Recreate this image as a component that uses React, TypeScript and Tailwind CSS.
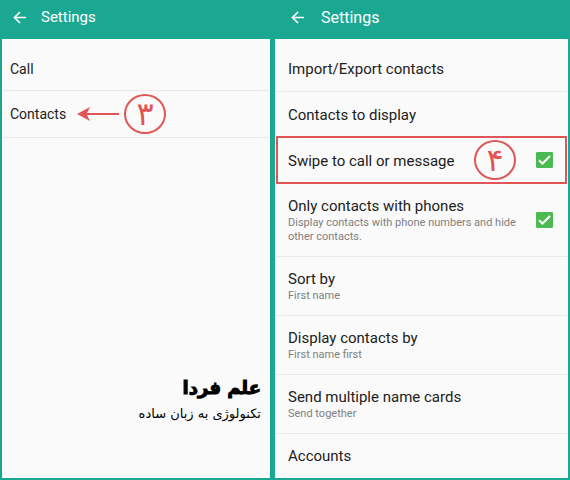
import { ReactNode } from "react";

type Item = {
    title: string;
    note?: string;
    checkbox?: boolean;
};

const items: Item[] = [
    { title: "Only contacts with phones", note: "Display contacts with phone numbers and hide other contacts.", checkbox: true },
    { title: "Sort by", note: "First name" },
    { title: "Display contacts by", note: "First name first" },
    { title: "Send multiple name cards", note: "Send together" },
];

function Header({ className }: { className: string }) {
    return (
        <header className={`flex h-[39px] items-center pb-1 text-white ${className}`}>
            <button type="button" aria-label="Back" className="block">
                <svg width="14" height="14" viewBox="0 0 14 14" fill="none" stroke="currentColor" strokeWidth="1.7">
                    <path d="M13 6.5H2M7 1 1.5 6.5 7 12" />
                </svg>
            </button>
            <h1>Settings</h1>
        </header>
    );
}

function Step({ children }: { children: ReactNode }) {
    return (
        <span className="flex h-10 w-[42px] items-center justify-center rounded-[50%] border-2 border-[#e05555] font-['DejaVu_Sans',sans-serif] text-[32px] leading-none text-[#e05555]">
            {children}
        </span>
    );
}

function Checkbox({ id }: { id: string }) {
    return (
        <span className="relative block h-4 w-[17px] shrink-0">
            <input id={id} type="checkbox" defaultChecked className="peer block h-4 w-[17px] appearance-none rounded-[1px] border border-[#4cba50] checked:bg-[#4cba50]" />
            <svg className="pointer-events-none absolute inset-0 hidden peer-checked:block" width="17" height="16" viewBox="0 0 17 16" fill="none" stroke="white" strokeWidth="2">
                <path d="M3 8.2 6.5 11.5 14 4" />
            </svg>
        </span>
    );
}

export default function App() {
    return (
        <div className="grid min-h-screen grid-cols-[268fr_293fr] gap-x-[5px] bg-[#1ba893] px-[2px] pb-[2px] font-[Roboto,sans-serif] text-[#212121]">
            <section className="flex flex-col">
                <Header className="gap-[14px] pl-[11px] text-[15px]" />
                <div className="flex grow flex-col bg-[#fafafa] text-[14px]">
                    <a href="#call" className="flex h-[52px] items-center border-b border-[#e8e8e8] px-2 pt-[10px]">Call</a>
                    <a href="#contacts" className="flex h-[47px] items-center border-b border-[#e8e8e8] px-2">
                        <span className="w-[67px]">Contacts</span>
                        <svg className="mr-[5px]" width="42" height="14" viewBox="0 0 42 14" fill="#e05555">
                            <path d="M0 7 13 0 10 6H42V8H10L13 14Z" />
                        </svg>
                        <Step>۳</Step>
                    </a>
                    <div dir="rtl" className="mt-auto pr-[9px] pb-[54px] font-['DejaVu_Sans',sans-serif] text-black">
                        <p className="text-[18px] leading-8 font-bold [-webkit-text-stroke:1px_black]">علم فردا</p>
                        <p className="text-[13px] leading-5">تکنولوژی به زبان ساده</p>
                    </div>
                </div>
            </section>

            <section className="flex flex-col">
                <Header className="gap-4 pl-4 text-base" />
                <div className="grow bg-[#fafafa] text-[15px]">
                    <a href="#import" className="flex h-[53px] items-center border-b border-[#e8e8e8] px-[13px] pt-2">Import/Export contacts</a>
                    <a href="#display" className="flex h-11 items-center px-[13px] pt-[2px]">Contacts to display</a>
                    <div className="mx-px flex h-12 items-center border-2 border-[#e05555] pr-3 pl-[10px]">
                        <label htmlFor="swipe" className="pt-[2px]">Swipe to call or message</label>
                        <span className="ml-auto flex items-center gap-5">
                            <Step>۴</Step>
                            <Checkbox id="swipe" />
                        </span>
                    </div>
                    {items.map((item, i) => (
                        <div key={item.title} className="flex items-center border-b border-[#e8e8e8] pt-3 pr-[15px] pb-3 pl-[13px]">
                            <label htmlFor={item.checkbox ? `item-${i}` : undefined} className="grow">
                                <span className="block leading-5">{item.title}</span>
                                {item.note && <span className="block max-w-60 text-[11px] leading-[14px] text-[#808080]">{item.note}</span>}
                            </label>
                            {item.checkbox && <Checkbox id={`item-${i}`} />}
                        </div>
                    ))}
                    <a href="#accounts" className="flex h-11 items-center px-[13px]">Accounts</a>
                </div>
            </section>
        </div>
    );
}
